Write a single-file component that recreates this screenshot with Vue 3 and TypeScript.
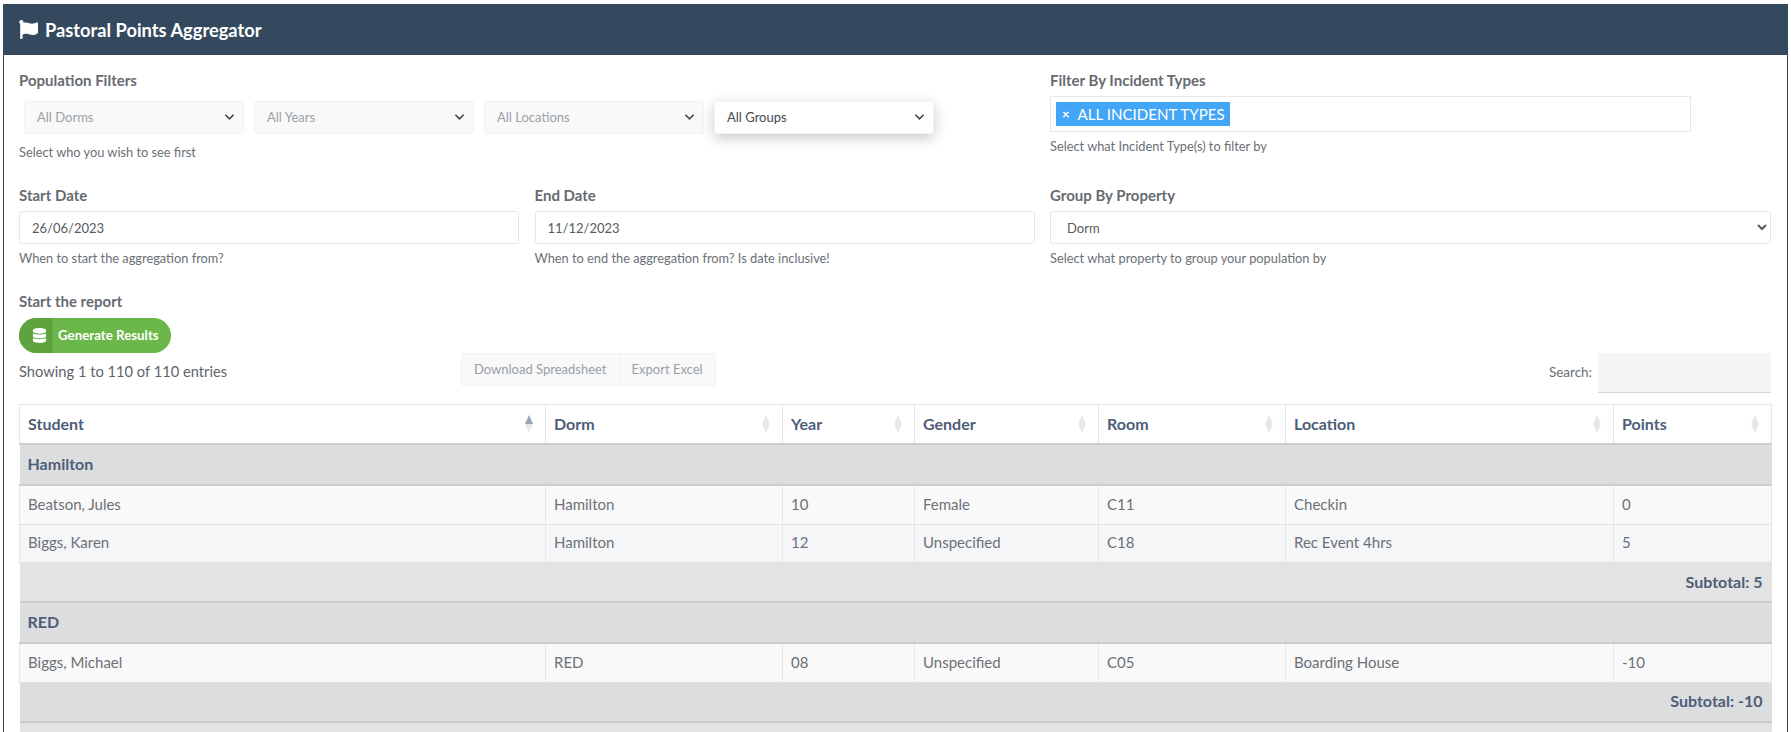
<script setup lang="ts">
interface Column { name: string; width: number; active?: boolean }
type Row =
  | { kind: 'group'; label: string; tone: string }
  | { kind: 'subtotal'; label: string; tone: string }
  | { kind: 'data'; cells: string[]; tone: string }

const filters = ['All Dorms', 'All Years', 'All Locations', 'All Groups']

const columns: Column[] = [
  { name: 'Student', width: 526, active: true },
  { name: 'Dorm', width: 237 },
  { name: 'Year', width: 132 },
  { name: 'Gender', width: 184 },
  { name: 'Room', width: 187 },
  { name: 'Location', width: 328 },
  { name: 'Points', width: 158 }
]

const rows: Row[] = [
  { kind: 'group', label: 'Hamilton', tone: 'tone-dark' },
  { kind: 'data', cells: ['Beatson, Jules', 'Hamilton', '10', 'Female', 'C11', 'Checkin', '0'], tone: 'tone-odd' },
  { kind: 'data', cells: ['Biggs, Karen', 'Hamilton', '12', 'Unspecified', 'C18', 'Rec Event 4hrs', '5'], tone: 'tone-even' },
  { kind: 'subtotal', label: 'Subtotal: 5', tone: 'tone-light' },
  { kind: 'group', label: 'RED', tone: 'tone-dark' },
  { kind: 'data', cells: ['Biggs, Michael', 'RED', '08', 'Unspecified', 'C05', 'Boarding House', '-10'], tone: 'tone-odd' },
  { kind: 'subtotal', label: 'Subtotal: -10', tone: 'tone-dark' },
  { kind: 'group', label: '', tone: 'tone-light' }
]
</script>

<template>
  <div class="page">
    <section class="card">
      <header class="card-header">
        <svg class="flag" viewBox="0 0 512 512" aria-hidden="true">
          <path fill="currentColor" d="M349.565 98.783C295.978 98.783 251.721 64 184.348 64c-24.955 0-47.309 4.384-68.045 12.013a55.947 55.947 0 0 0 3.586-23.562C118.117 24.015 94.806 1.206 66.338.048 34.345-1.254 8 24.296 8 56c0 19.026 9.497 35.825 24 45.945V488c0 13.255 10.745 24 24 24h16c13.255 0 24-10.745 24-24v-94.4c28.311-12.064 63.582-22.122 114.435-22.122 53.588 0 97.844 34.783 165.217 34.783 48.169 0 86.667-16.294 122.505-40.858C506.84 359.452 512 349.571 512 339.045v-243.1c0-23.393-24.269-38.87-45.485-29.016-34.338 15.948-76.454 31.854-116.95 31.854z" />
        </svg>
        <h1>Pastoral Points Aggregator</h1>
      </header>

      <div class="card-body">
        <div class="form-grid">
          <div class="field span-two">
            <label>Population Filters</label>
            <div class="filter-list">
              <div
                v-for="(f, i) in filters"
                :key="f"
                class="filter-select"
                :class="{ focused: i === filters.length - 1 }"
              >
                <span>{{ f }}</span>
                <svg class="chev" viewBox="0 0 12 8" aria-hidden="true">
                  <path d="M1.5 1.5 6 6l4.5-4.5" fill="none" stroke="currentColor" stroke-width="1.7" />
                </svg>
              </div>
            </div>
            <p class="help help-wide">Select who you wish to see first</p>
          </div>

          <div class="field">
            <label>Filter By Incident Types</label>
            <div class="tag-box">
              <span class="tag"><span class="tag-x">×</span>ALL INCIDENT TYPES</span>
            </div>
            <p class="help">Select what Incident Type(s) to filter by</p>
          </div>

          <div class="field">
            <label>Start Date</label>
            <input class="control" type="text" value="26/06/2023" />
            <p class="help">When to start the aggregation from?</p>
          </div>

          <div class="field">
            <label>End Date</label>
            <input class="control" type="text" value="11/12/2023" />
            <p class="help">When to end the aggregation from? Is date inclusive!</p>
          </div>

          <div class="field">
            <label>Group By Property</label>
            <select class="control">
              <option>Dorm</option>
            </select>
            <p class="help">Select what property to group your population by</p>
          </div>
        </div>

        <div class="report">
          <label>Start the report</label>
          <button class="generate" type="button">
            <span class="generate-icon">
              <svg viewBox="0 0 448 512" aria-hidden="true">
                <path fill="currentColor" d="M448 73.143v45.714C448 159.143 347.667 192 224 192S0 159.143 0 118.857V73.143C0 32.857 100.333 0 224 0s224 32.857 224 73.143zM448 176v102.857C448 319.143 347.667 352 224 352S0 319.143 0 278.857V176c48.125 33.143 136.208 48.572 224 48.572S399.874 209.143 448 176zm0 160v102.857C448 479.143 347.667 512 224 512S0 479.143 0 438.857V336c48.125 33.143 136.208 48.572 224 48.572S399.874 369.143 448 336z" />
              </svg>
            </span>
            <span class="generate-text">Generate Results</span>
          </button>
        </div>

        <div class="toolbar">
          <div class="info">Showing 1 to 110 of 110 entries</div>
          <div class="export-group">
            <button type="button">Download Spreadsheet</button>
            <button type="button">Export Excel</button>
          </div>
          <div class="search">
            <span>Search:</span>
            <input type="search" />
          </div>
        </div>

        <table class="results">
          <colgroup>
            <col v-for="c in columns" :key="c.name" :style="{ width: c.width + 'px' }" />
          </colgroup>
          <thead>
            <tr>
              <th v-for="c in columns" :key="c.name">
                <div class="th-inner">
                  <span>{{ c.name }}</span>
                  <span class="sort" :class="{ active: c.active }"><i class="up"></i><i class="down"></i></span>
                </div>
              </th>
            </tr>
          </thead>
          <tbody>
            <template v-for="(r, i) in rows" :key="i">
              <tr v-if="r.kind === 'data'" class="row-data" :class="r.tone">
                <td v-for="(cell, j) in r.cells" :key="j">{{ cell }}</td>
              </tr>
              <tr v-else-if="r.kind === 'group'" class="row-group" :class="r.tone">
                <td colspan="7">{{ r.label }}</td>
              </tr>
              <tr v-else class="row-subtotal" :class="r.tone">
                <td colspan="7">{{ r.label }}</td>
              </tr>
            </template>
          </tbody>
        </table>
      </div>
    </section>
  </div>
</template>

<style>
html, body { margin: 0; background: #fff; overflow: hidden; }
</style>

<style scoped>
.page {
  box-sizing: border-box;
  height: 732px;
  overflow: hidden;
  padding: 4px 3px 0;
  font-family: Lato, "Open Sans", sans-serif;
  font-size: 14px;
  color: #6a6f76;
}
.card { border: 1px solid #34495e; border-top: 0; min-height: 800px; }
.card-header {
  height: 51px;
  background: #34495e;
  color: #fff;
  display: flex;
  align-items: center;
  padding: 0 15px;
  margin: 0 -1px;
}
.flag { width: 19px; height: 19px; margin-right: 7px; margin-left: 1px; }
h1 { margin: 0; font-size: 18.3px; font-weight: 700; }
.card-body { padding: 16px 16px 0 15px; }

.form-grid {
  display: grid;
  grid-template-columns: 500fr 500fr 721fr;
  column-gap: 15.5px;
  row-gap: 25px;
}
.span-two { grid-column: span 2; }
label { display: block; font-weight: 700; font-size: 15px; line-height: 18px; padding-bottom: 2px; color: #666b72; }
.help { margin: 5px 0 0; font-size: 12.8px; line-height: 18px; color: #6b7075; }
.help-wide { margin-top: 9px; }

.filter-list { display: flex; gap: 10px; margin: 10px 0 0 5px; }
.filter-select {
  box-sizing: border-box;
  width: 220px;
  height: 33px;
  background: #f9f9f9;
  border: 1px solid #f3f3f3;
  border-radius: 3px;
  display: flex;
  align-items: center;
  justify-content: space-between;
  padding: 0 8px 2px 12px;
  font-size: 13px;
  color: #9aa1a8;
}
.filter-select .chev { width: 11px; height: 8px; color: #3c4650; }
.filter-select.focused {
  background: #fff;
  color: #444b52;
  box-shadow: 0 4px 14px rgba(0, 0, 0, 0.22);
}
.tag-box {
  box-sizing: border-box;
  width: 641px;
  height: 36px;
  margin-top: 5px;
  border: 1px solid #e6e7e8;
  padding: 5px;
}
.tag {
  display: inline-flex;
  align-items: center;
  height: 24px;
  width: 174px;
  box-sizing: border-box;
  background: #42a5f5;
  color: #fff;
  font-size: 15.1px;
  padding-left: 6px;
  white-space: nowrap;
}
.tag-x { font-weight: 700; font-size: 13px; margin-right: 8px; }
.control {
  display: block;
  box-sizing: border-box;
  width: 100%;
  height: 33px;
  margin-top: 5px;
  border: 1px solid #e6e7e8;
  border-radius: 3px;
  background: #fff;
  padding: 0 12px;
  font-family: inherit;
  font-size: 13px;
  color: #555b61;
  outline: none;
}

.report { margin-top: 25px; }
.generate {
  display: flex;
  align-items: stretch;
  width: 152px;
  height: 35px;
  margin-top: 6px;
  padding: 0;
  border: 0;
  border-radius: 18px;
  overflow: hidden;
  background: #6cb74a;
  color: #fff;
  font-family: inherit;
  font-weight: 700;
}
.generate-icon {
  width: 33px;
  background: #5fa33f;
  border-right: 1px solid #5a9a3b;
  display: flex;
  align-items: center;
  justify-content: center;
  padding-left: 8px;
  box-sizing: border-box;
}
.generate-icon svg { width: 15px; height: 15px; flex: none; }
.generate-text { font-size: 13.3px; line-height: 35px; margin-left: 6px; white-space: nowrap; }

.toolbar { display: flex; align-items: flex-start; height: 40px; margin-bottom: 11px; }
.info { width: 442px; margin-top: 8px; font-size: 14.7px; line-height: 20px; color: #5f646b; }
.export-group {
  display: flex;
  height: 33px;
  border: 1px solid #f3f3f3;
  border-radius: 3px;
  background: #f9f9f9;
  box-sizing: border-box;
}
.export-group button {
  border: 0;
  background: transparent;
  font-family: inherit;
  font-size: 13px;
  color: #98a0a7;
  padding: 0 12px 2px;
}
.export-group button + button { border-left: 1px solid #f0f0f0; }
.search { margin-left: auto; display: flex; align-items: flex-start; font-size: 13.5px; color: #696e74; }
.search span { margin-top: 9px; line-height: 20px; margin-right: 6px; }
.search input {
  box-sizing: border-box;
  width: 173px;
  height: 40px;
  border: 0;
  border-bottom: 1px solid #d6d6d6;
  background: #f5f5f5;
  outline: none;
}

.results { width: 1752px; table-layout: fixed; border-collapse: collapse; }
.results th {
  height: 36px;
  padding: 0 12.5px 2px 8px;
  border: 1px solid #e6e7e8;
  border-bottom: 2px solid #cdcdcd;
  background: #fff;
  text-align: left;
  font-size: 16px;
  font-weight: 700;
  color: #4e5d78;
}
.th-inner { display: flex; align-items: center; justify-content: space-between; }
.sort { display: flex; flex-direction: column; gap: 0; margin-top: 2px; }
.sort i { display: block; width: 0; height: 0; border-left: 4.5px solid transparent; border-right: 4.5px solid transparent; }
.sort .up { border-bottom: 9px solid #e6e8ec; }
.sort .down { border-top: 9px solid #e6e8ec; }
.sort.active .up { border-bottom-color: #98a3b3; }

.results td { padding: 0 9px 2px 8px; font-size: 15px; color: #6c7178; }
.row-data td { height: 35.5px; border: 1px solid #e6e7e8; border-bottom-color: #dfe1e3; }
.row-group td { height: 37px; font-size: 16px; font-weight: 700; color: #4e5d78; border-bottom: 2px solid #cdcdcd; }
.row-subtotal td { height: 36px; text-align: right; font-size: 16px; font-weight: 700; color: #4e5d78; border-bottom: 2px solid #cdcdcd; }
.tone-dark td { background: #dcdddf; }
.tone-light td { background: #e3e3e3; }
.tone-odd td { background: #f9f9f9; }
.tone-even td { background: #f5f6f8; }
</style>
